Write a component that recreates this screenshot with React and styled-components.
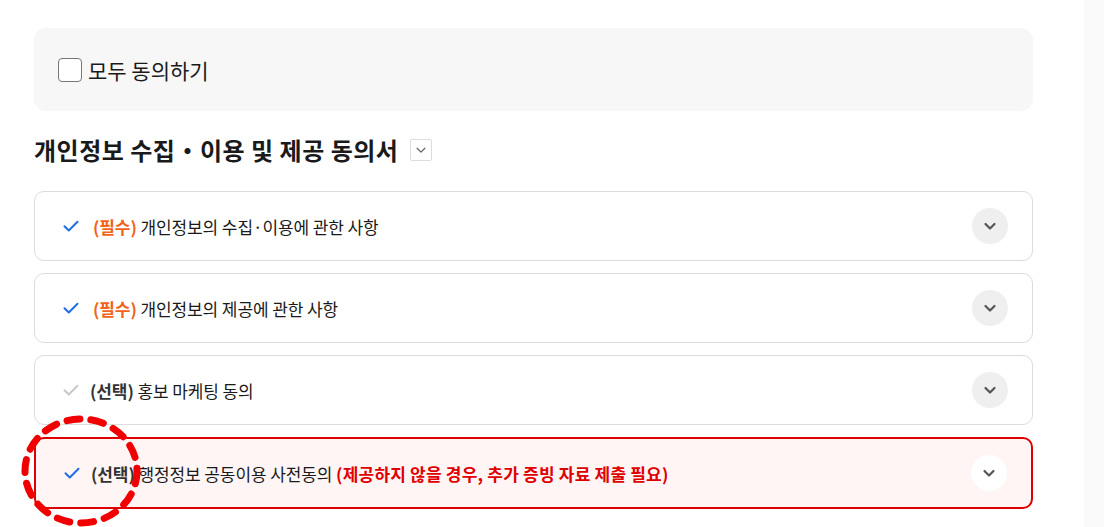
import React from "react";
import styled, { createGlobalStyle } from "styled-components";

const GlobalStyle = createGlobalStyle`
	body {
		margin: 0;
		background: #ffffff;
		font-family: "Noto Sans CJK KR", "Noto Sans", sans-serif;
		color: #222222;
	}
`;

const Page = styled.div`
	display: flex;
	height: 527px;
	overflow: hidden;
`;

const Main = styled.div`
	flex: 1;
	padding: 28px 51px 0 34px;
	position: relative;
`;

const SideStrip = styled.div`
	width: 20px;
	background: #fafafa;
`;

const AllAgreeBox = styled.label`
	display: flex;
	align-items: center;
	gap: 6px;
	height: 83px;
	padding-left: 24px;
	box-sizing: border-box;
	background: #f7f7f7;
	border-radius: 12px;
	font-size: 21px;
	color: #1a1a1a;
`;

const CheckBox = styled.span`
	width: 22px;
	height: 22px;
	border: 1px solid #767676;
	border-radius: 4px;
	background: #ffffff;
`;

const TitleRow = styled.div`
	display: flex;
	align-items: center;
	gap: 12px;
	margin-top: 21px;
	height: 34px;
`;

const Title = styled.h2`
	margin: 0;
	font-size: 24px;
	font-weight: 700;
	color: #1a1a1a;
	letter-spacing: 0.5px;
`;

const SmallToggle = styled.button`
	width: 22px;
	height: 22px;
	padding: 0;
	margin-top: 2px;
	border: 1px solid #dddddd;
	border-radius: 2px;
	background: #ffffff;
	display: flex;
	align-items: center;
	justify-content: center;
`;

const CardList = styled.div`
	display: flex;
	flex-direction: column;
	gap: 12px;
	margin-top: 25px;
`;

const Card = styled.div`
	display: flex;
	align-items: center;
	height: ${({ $alert }) => ($alert ? "72px" : "70px")};
	box-sizing: border-box;
	padding: 0 24px 0 28px;
	border: ${({ $alert }) => ($alert ? "2px solid #e00000" : "1px solid #dcdcdc")};
	border-radius: 10px;
	background: ${({ $alert }) => ($alert ? "#fff5f5" : "#ffffff")};
`;

const CheckMark = styled.span`
	display: flex;
	width: 16px;
	margin-right: ${({ $wide }) => ($wide ? "14px" : "11px")};
`;

const Label = styled.span`
	flex: 1;
	font-size: 17px;
	color: #1a1a1a;
	letter-spacing: -0.1px;
`;

const Tag = styled.b`
	font-weight: 700;
	color: ${({ $required }) => ($required ? "#f2621c" : "#333333")};
`;

const Warn = styled.b`
	font-weight: 700;
	color: #e00000;
	letter-spacing: 0.2px;
`;

const ExpandButton = styled.button`
	width: 36px;
	height: 36px;
	padding: 0;
	border: none;
	border-radius: 50%;
	background: ${({ $alert }) => ($alert ? "#ffffff" : "#efefef")};
	display: flex;
	align-items: center;
	justify-content: center;
`;

const Annotation = styled.svg`
	position: absolute;
	left: 20px;
	top: 414px;
	pointer-events: none;
`;

const Chevron = ({ size = 14, color = "#555555", width = 2.2 }) => (
	<svg width={size} height={size} viewBox="0 0 14 14" fill="none">
		<path d="M2.5 5l4.5 4.5L11.5 5" stroke={color} strokeWidth={width} strokeLinecap="round" strokeLinejoin="round" />
	</svg>
);

const Check = ({ color }) => (
	<svg width="16" height="12" viewBox="0 0 16 12" fill="none">
		<path d="M1.5 6.2l4.3 4.3L14.5 1.8" stroke={color} strokeWidth="2" strokeLinecap="round" strokeLinejoin="round" />
	</svg>
);

const items = [
	{ tag: "(필수)", required: true, text: "개인정보의 수집·이용에 관한 사항", checked: true },
	{ tag: "(필수)", required: true, text: "개인정보의 제공에 관한 사항", checked: true },
	{ tag: "(선택)", required: false, text: "홍보 마케팅 동의", checked: false },
	{
		tag: "(선택)",
		required: false,
		text: "행정정보 공동이용 사전동의",
		warn: "(제공하지 않을 경우, 추가 증빙 자료 제출 필요)",
		checked: true,
		alert: true,
	},
];

const App = () => (
	<>
		<GlobalStyle />
		<Page>
			<Main>
				<AllAgreeBox>
					<CheckBox />
					모두 동의하기
				</AllAgreeBox>
				<TitleRow>
					<Title>개인정보 수집・이용 및 제공 동의서</Title>
					<SmallToggle>
						<Chevron size={12} color="#666666" width={1.5} />
					</SmallToggle>
				</TitleRow>
				<CardList>
					{items.map((item, i) => (
						<Card key={i} $alert={item.alert}>
							<CheckMark $wide={item.required}>
								<Check color={item.checked ? "#1f6fe5" : "#c8c8c8"} />
							</CheckMark>
							<Label>
								<Tag $required={item.required}>{item.tag}</Tag> {item.text}
								{item.warn && <> <Warn>{item.warn}</Warn></>}
							</Label>
							<ExpandButton $alert={item.alert}>
								<Chevron />
							</ExpandButton>
						</Card>
					))}
				</CardList>
				<Annotation width="126" height="118" viewBox="0 0 126 118">
					<ellipse
						cx="61"
						cy="57"
						rx="56"
						ry="52"
						fill="none"
						stroke="#f00000"
						strokeWidth="7"
						strokeDasharray="13 11"
						strokeLinecap="round"
					/>
				</Annotation>
			</Main>
			<SideStrip />
		</Page>
	</>
);

export default App;
